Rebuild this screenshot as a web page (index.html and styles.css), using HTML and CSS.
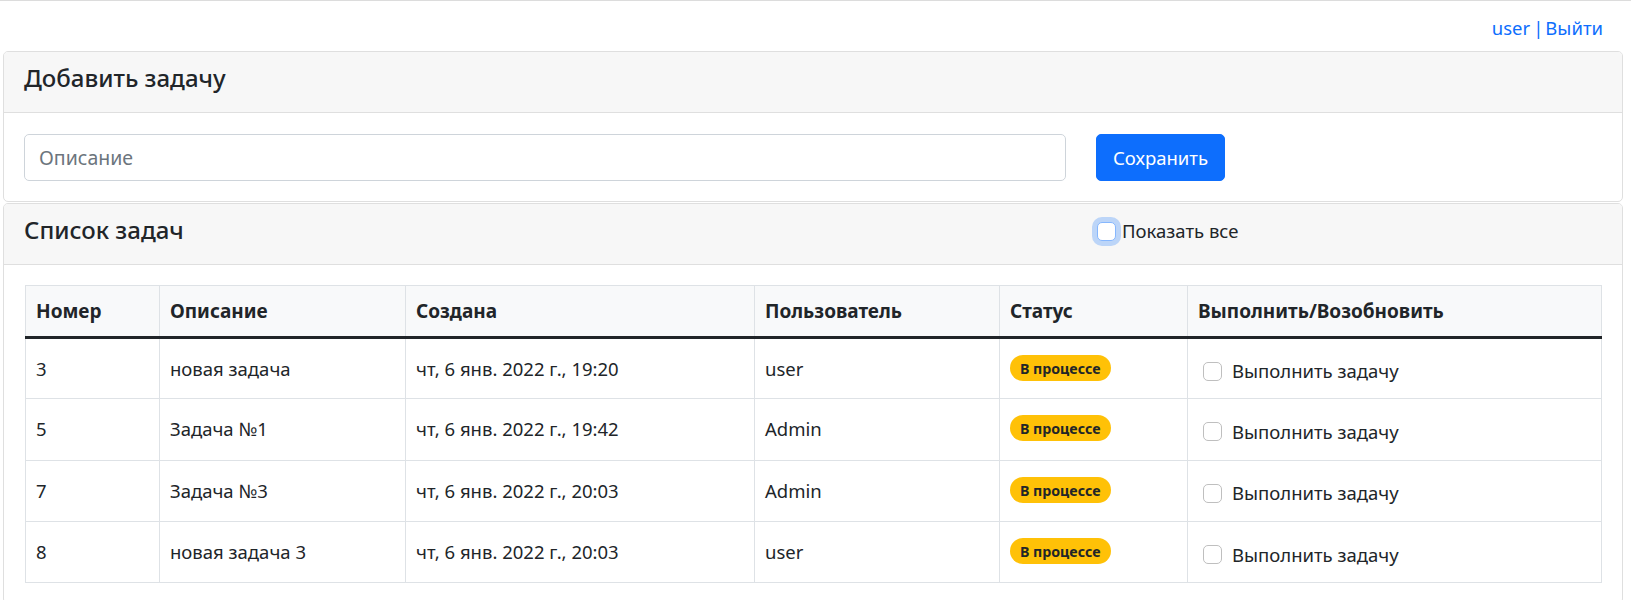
FILE: index.html
```html
<!DOCTYPE html>
<html lang="ru">
<head>
<meta charset="utf-8">
<title>Задачи</title>
<link rel="stylesheet" href="styles.css">
</head>
<body>
<div class="topline"></div>
<div class="userbar"><a href="#" class="link">user</a><span class="sep">|</span><a href="#" class="link">Выйти</a></div>
<div class="page">
  <div class="card">
    <div class="card-header"><h5 class="title">Добавить задачу</h5></div>
    <div class="card-body card-body-form">
      <div class="row">
        <input class="form-control" type="text" placeholder="Описание">
        <div><button class="btn">Сохранить</button></div>
      </div>
    </div>
  </div>
  <div class="card card-second">
    <div class="card-header">
      <div class="row">
        <h5 class="title">Список задач</h5>
        <label class="show-all"><input type="checkbox" class="check check-focus"><span>Показать все</span></label>
      </div>
    </div>
    <div class="card-body">
      <table class="table">
        <thead>
          <tr><th>Номер</th><th>Описание</th><th>Создана</th><th>Пользователь</th><th>Статус</th><th>Выполнить/Возобновить</th></tr>
        </thead>
        <tbody>
          <tr><td>3</td><td>новая задача</td><td>чт, 6 янв. 2022 г., 19:20</td><td>user</td><td class="status"><span class="badge">В процессе</span></td><td><label class="form-check"><input type="checkbox" class="check"><span>Выполнить задачу</span></label></td></tr>
          <tr><td>5</td><td>Задача №1</td><td>чт, 6 янв. 2022 г., 19:42</td><td>Admin</td><td class="status"><span class="badge">В процессе</span></td><td><label class="form-check"><input type="checkbox" class="check"><span>Выполнить задачу</span></label></td></tr>
          <tr><td>7</td><td>Задача №3</td><td>чт, 6 янв. 2022 г., 20:03</td><td>Admin</td><td class="status"><span class="badge">В процессе</span></td><td><label class="form-check"><input type="checkbox" class="check"><span>Выполнить задачу</span></label></td></tr>
          <tr><td>8</td><td>новая задача 3</td><td>чт, 6 янв. 2022 г., 20:03</td><td>user</td><td class="status"><span class="badge">В процессе</span></td><td><label class="form-check"><input type="checkbox" class="check"><span>Выполнить задачу</span></label></td></tr>
        </tbody>
      </table>
    </div>
  </div>
</div>
</body>
</html>
```
FILE: styles.css
```css
* { box-sizing: border-box; }
html, body { margin: 0; padding: 0; background: #fff; }
body {
  font-family: "Noto Sans", "Open Sans", sans-serif;
  font-size: 18.5px;
  line-height: 30px;
  color: #212529;
}
.topline { height: 1px; background: #dcdcdc; }
.userbar {
  display: flex;
  justify-content: flex-end;
  padding: 12px 28px 8px 0;
  color: #0d6efd;
}
.link { color: #0d6efd; text-decoration: none; }
.sep { margin: 0 2px 0 3px; }
.page { padding: 0 8px 0 3px; }
.card {
  border: 1px solid #dfdfdf;
  border-radius: 5px;
  background: #fff;
  overflow: hidden;
}
.card-second { margin-top: 1px; }
.card-header {
  background: #f7f7f7;
  padding: 10px 20px;
  border-bottom: 1px solid #dfdfdf;
}
.title {
  margin: 0 0 10px 0;
  font-size: 24px;
  font-weight: 500;
  line-height: 30px;
  position: relative;
  top: 1px;
}
.card-body { padding: 20px; }
.card-body-form { padding-top: 21px; }
.row {
  display: grid;
  grid-template-columns: calc((100% + 30px) * 2 / 3 - 30px) 1fr;
  column-gap: 30px;
}
.form-control {
  display: block;
  width: 100%;
  height: 47px;
  padding: 7px 14px;
  font: inherit;
  font-size: 19.5px;
  color: #212529;
  border: 1px solid #ced4da;
  border-radius: 5px;
  outline: none;
}
.form-control::placeholder { color: #6c757d; }
.btn {
  height: 47px;
  padding: 7px 16px;
  font: inherit;
  color: #fff;
  background: #0d6efd;
  border: 1px solid #0d6efd;
  border-radius: 5px;
}
.show-all {
  display: flex;
  align-items: center;
  height: 30px;
  margin-top: 2px;
}
.check {
  appearance: none;
  -webkit-appearance: none;
  width: 19px;
  height: 19px;
  margin: 0;
  background: #fff;
  border: 1px solid #bfbfbf;
  border-radius: 5px;
  flex: none;
}
.check-focus {
  border-color: #86b7fe;
  box-shadow: 0 0 0 5px rgba(13, 110, 253, 0.25);
  margin-left: 1px;
  margin-right: 6px;
}
.table {
  border-collapse: collapse;
  table-layout: fixed;
  margin-left: 1px;
  width: calc(100% - 1px);
}
.table th, .table td {
  border: 1px solid #dee2e6;
  padding: 10px 10px;
  text-align: left;
  vertical-align: middle;
}
.table th {
  background: #f8f9fa;
  font-weight: 700;
  font-size: 19px;
  height: 50px;
  border-bottom: 3px solid #212529;
}
.table td { height: 61.3px; }
.table th:nth-child(1) { width: 134px; }
.table th:nth-child(2) { width: 246px; }
.table th:nth-child(3) { width: 349px; }
.table th:nth-child(4) { width: 245px; }
.table th:nth-child(5) { width: 188px; }
.table td.status { line-height: 0; }
.badge {
  display: inline-block;
  background: #ffc107;
  color: #212529;
  font-weight: 700;
  font-size: 14.2px;
  line-height: 15px;
  padding: 6px 10px 5px;
  border-radius: 13px;
  position: relative;
  top: -1px;
}
.form-check {
  display: flex;
  align-items: center;
  margin-top: 5px;
  padding-left: 5px;
}
.form-check .check { margin-right: 10px; }
```
